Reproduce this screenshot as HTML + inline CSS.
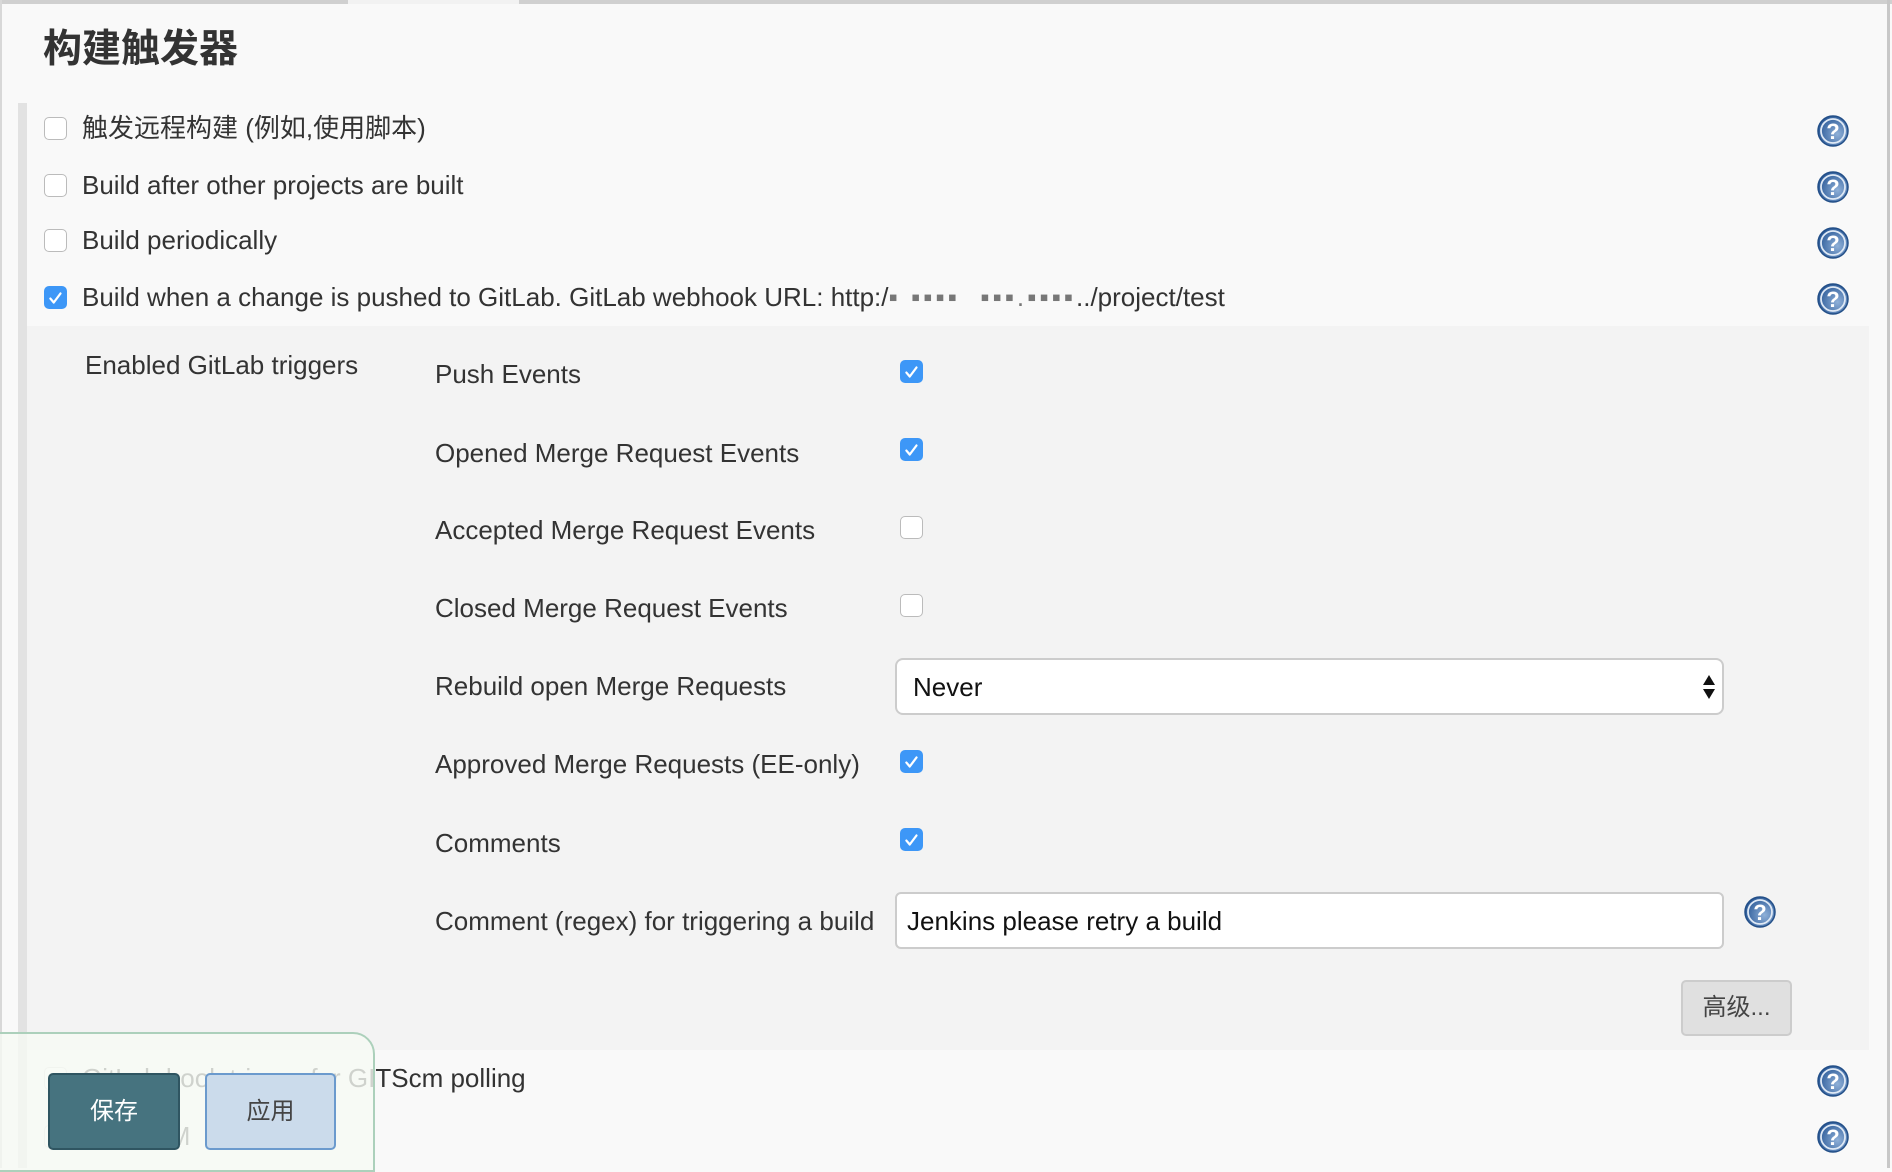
<!DOCTYPE html>
<html><head><meta charset="utf-8"><style>
body{margin:0;width:1892px;height:1168px;overflow:hidden;background:#f9f9f9;font-family:"Liberation Sans","Noto Sans CJK SC",sans-serif;color:#333;position:relative}
.a{position:absolute}
.t{font-size:26px;line-height:30px;white-space:nowrap}
.cb{position:absolute;width:23px;height:23px;border:1px solid #bbb;border-radius:5px;background:#fff;box-sizing:border-box}
.cb.on{background:#3d97f7;border-color:#3d97f7}
.cb.on svg{position:absolute;left:2px;top:2px}
.help{position:absolute;width:32px;height:32px}
</style></head><body>
<div class="a" style="left:0;top:0;width:1892px;height:4px;background:#d0d0d0"></div>
<div class="a" style="left:348px;top:0;width:171px;height:4px;background:#f2f2f2"></div>
<div class="a" style="left:1887px;top:0;width:3px;height:1168px;background:#c8c8c8"></div>
<div class="a" style="left:0;top:0;width:2px;height:1168px;background:#d8d8d8"></div>
<div class="a" style="left:43px;top:18px;font-size:39px;font-weight:bold;color:#333">构建触发器</div>
<div class="a" style="left:18px;top:103px;width:9px;height:1065px;background:#e2e2e2"></div>
<div class="a" style="left:27px;top:326px;width:1842px;height:724px;background:#f3f3f3"></div>

<div class="cb" style="left:44px;top:117px"></div>
<div class="a t" style="left:82px;top:113px">触发远程构建 (例如,使用脚本)</div>
<div class="cb" style="left:44px;top:174px"></div>
<div class="a t" style="left:82px;top:170px">Build after other projects are built</div>
<div class="cb" style="left:44px;top:229px"></div>
<div class="a t" style="left:82px;top:225px">Build periodically</div>
<div class="cb on" style="left:44px;top:286px"><svg width="18" height="18" viewBox="0 0 16 16"><path d="M3 8.5l3 3.5 6-8" stroke="#fff" stroke-width="2" fill="none" stroke-linecap="round" stroke-linejoin="round"/></svg></div>
<div class="a t" style="left:82px;top:282px">Build when a change is pushed to GitLab. GitLab webhook URL: http:/<span style="color:#777;letter-spacing:3px">▪ ▪▪▪▪ &nbsp;▪▪▪.▪▪▪▪</span>../project/test</div>

<div class="a t" style="left:85px;top:350px">Enabled GitLab triggers</div>
<div class="a t" style="left:435px;top:359px">Push Events</div>
<div class="a t" style="left:435px;top:438px">Opened Merge Request Events</div>
<div class="a t" style="left:435px;top:515px">Accepted Merge Request Events</div>
<div class="a t" style="left:435px;top:593px">Closed Merge Request Events</div>
<div class="a t" style="left:435px;top:671px">Rebuild open Merge Requests</div>
<div class="a t" style="left:435px;top:749px">Approved Merge Requests (EE-only)</div>
<div class="a t" style="left:435px;top:828px">Comments</div>
<div class="a t" style="left:435px;top:906px">Comment (regex) for triggering a build</div>

<div class="cb on" style="left:900px;top:360px"><svg width="18" height="18" viewBox="0 0 16 16"><path d="M3 8.5l3 3.5 6-8" stroke="#fff" stroke-width="2" fill="none" stroke-linecap="round" stroke-linejoin="round"/></svg></div>
<div class="cb on" style="left:900px;top:438px"><svg width="18" height="18" viewBox="0 0 16 16"><path d="M3 8.5l3 3.5 6-8" stroke="#fff" stroke-width="2" fill="none" stroke-linecap="round" stroke-linejoin="round"/></svg></div>
<div class="cb" style="left:900px;top:516px"></div>
<div class="cb" style="left:900px;top:594px"></div>
<div class="cb on" style="left:900px;top:750px"><svg width="18" height="18" viewBox="0 0 16 16"><path d="M3 8.5l3 3.5 6-8" stroke="#fff" stroke-width="2" fill="none" stroke-linecap="round" stroke-linejoin="round"/></svg></div>
<div class="cb on" style="left:900px;top:828px"><svg width="18" height="18" viewBox="0 0 16 16"><path d="M3 8.5l3 3.5 6-8" stroke="#fff" stroke-width="2" fill="none" stroke-linecap="round" stroke-linejoin="round"/></svg></div>

<div class="a" style="left:895px;top:658px;width:829px;height:57px;box-sizing:border-box;border:2px solid #ccc;border-radius:8px;background:#fff"></div>
<div class="a t" style="left:913px;top:672px;color:#111">Never</div>
<svg class="a" style="left:1702px;top:674px" width="14" height="26" viewBox="0 0 14 26"><path d="M7 1L13 11H1z M7 25L13 15H1z" fill="#111"/></svg>
<div class="a" style="left:895px;top:892px;width:829px;height:57px;box-sizing:border-box;border:2px solid #ccc;border-radius:6px;background:#fff"></div>
<div class="a t" style="left:907px;top:906px;color:#111">Jenkins please retry a build</div>
<div class="a" style="left:1681px;top:980px;width:111px;height:56px;box-sizing:border-box;border:2px solid #ccc;border-radius:5px;background:#e0e0e0;font-size:24px;line-height:52px;text-align:center;color:#444">高级...</div>

<div class="cb" style="left:44px;top:1067px;opacity:.5"></div>
<div class="a t" style="left:82px;top:1063px">GitLab hook trigger for GITScm polling</div>
<div class="cb" style="left:44px;top:1125px;opacity:.5"></div>
<div class="a t" style="left:82px;top:1121px">Poll SCM</div>

<div class="a" style="left:-2px;top:1032px;width:377px;height:140px;box-sizing:border-box;border:2px solid #acd0bb;border-top-right-radius:22px;background:rgba(246,250,244,0.8)"></div>
<div class="a" style="left:48px;top:1073px;width:132px;height:77px;box-sizing:border-box;border:2px solid #2f5561;border-radius:5px;background:#46737f;color:#fff;font-size:24px;line-height:73px;text-align:center">保存</div>
<div class="a" style="left:205px;top:1073px;width:131px;height:77px;box-sizing:border-box;border:2px solid #6b9acd;border-radius:5px;background:#cbdbeb;color:#444;font-size:24px;line-height:73px;text-align:center">应用</div>

<svg width="0" height="0" style="position:absolute"><defs><radialGradient id="g" cx="65%" cy="60%" r="75%"><stop offset="0" stop-color="#8fb0d8"/><stop offset="1" stop-color="#1d4e8f"/></radialGradient></defs></svg>
<svg class="help" style="left:1817px;top:115px" viewBox="0 0 32 32"><circle cx="16" cy="16" r="15" fill="url(#g)" stroke="#234f88" stroke-width="1.5"/><circle cx="16" cy="16" r="12" fill="none" stroke="#dfe9f5" stroke-width="1.8"/><text x="16" y="24" font-size="22" font-weight="bold" fill="#fff" text-anchor="middle" font-family="Liberation Sans">?</text></svg>
<svg class="help" style="left:1817px;top:171px" viewBox="0 0 32 32"><circle cx="16" cy="16" r="15" fill="url(#g)" stroke="#234f88" stroke-width="1.5"/><circle cx="16" cy="16" r="12" fill="none" stroke="#dfe9f5" stroke-width="1.8"/><text x="16" y="24" font-size="22" font-weight="bold" fill="#fff" text-anchor="middle" font-family="Liberation Sans">?</text></svg>
<svg class="help" style="left:1817px;top:227px" viewBox="0 0 32 32"><circle cx="16" cy="16" r="15" fill="url(#g)" stroke="#234f88" stroke-width="1.5"/><circle cx="16" cy="16" r="12" fill="none" stroke="#dfe9f5" stroke-width="1.8"/><text x="16" y="24" font-size="22" font-weight="bold" fill="#fff" text-anchor="middle" font-family="Liberation Sans">?</text></svg>
<svg class="help" style="left:1817px;top:283px" viewBox="0 0 32 32"><circle cx="16" cy="16" r="15" fill="url(#g)" stroke="#234f88" stroke-width="1.5"/><circle cx="16" cy="16" r="12" fill="none" stroke="#dfe9f5" stroke-width="1.8"/><text x="16" y="24" font-size="22" font-weight="bold" fill="#fff" text-anchor="middle" font-family="Liberation Sans">?</text></svg>
<svg class="help" style="left:1744px;top:896px" viewBox="0 0 32 32"><circle cx="16" cy="16" r="15" fill="url(#g)" stroke="#234f88" stroke-width="1.5"/><circle cx="16" cy="16" r="12" fill="none" stroke="#dfe9f5" stroke-width="1.8"/><text x="16" y="24" font-size="22" font-weight="bold" fill="#fff" text-anchor="middle" font-family="Liberation Sans">?</text></svg>
<svg class="help" style="left:1817px;top:1065px" viewBox="0 0 32 32"><circle cx="16" cy="16" r="15" fill="url(#g)" stroke="#234f88" stroke-width="1.5"/><circle cx="16" cy="16" r="12" fill="none" stroke="#dfe9f5" stroke-width="1.8"/><text x="16" y="24" font-size="22" font-weight="bold" fill="#fff" text-anchor="middle" font-family="Liberation Sans">?</text></svg>
<svg class="help" style="left:1817px;top:1121px" viewBox="0 0 32 32"><circle cx="16" cy="16" r="15" fill="url(#g)" stroke="#234f88" stroke-width="1.5"/><circle cx="16" cy="16" r="12" fill="none" stroke="#dfe9f5" stroke-width="1.8"/><text x="16" y="24" font-size="22" font-weight="bold" fill="#fff" text-anchor="middle" font-family="Liberation Sans">?</text></svg>
</body></html>
